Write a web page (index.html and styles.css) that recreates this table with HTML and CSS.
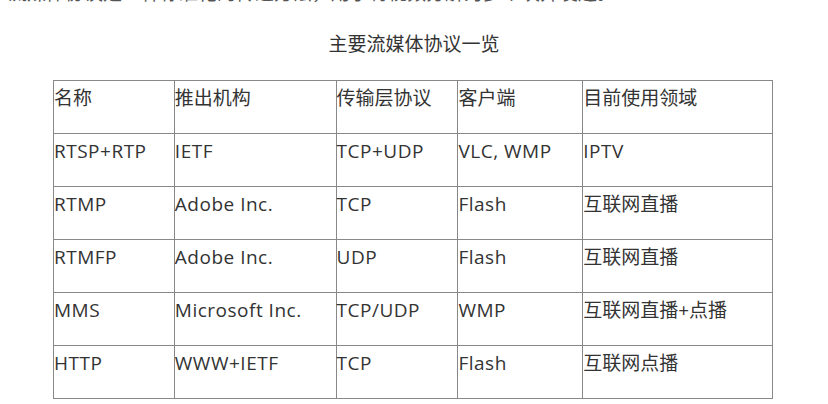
FILE: index.html
```html
<!DOCTYPE html>
<html lang="zh">
<head>
<meta charset="utf-8">
<link rel="stylesheet" href="styles.css">
</head>
<body>
<div class="page">
  <div class="cut"><span>流媒体协议是一种标准化的传递方法，用于将视频分解为多个块并发送。</span></div>
  <p class="title">主要流媒体协议一览</p>
  <table class="proto">
    <colgroup>
      <col class="c1"><col class="c2"><col class="c3"><col class="c4"><col class="c5">
    </colgroup>
    <tr><td>名称</td><td>推出机构</td><td>传输层协议</td><td>客户端</td><td>目前使用领域</td></tr>
    <tr><td class="en">RTSP+RTP</td><td class="en">IETF</td><td class="en">TCP+UDP</td><td class="en">VLC, WMP</td><td class="en">IPTV</td></tr>
    <tr><td class="en">RTMP</td><td class="en">Adobe Inc.</td><td class="en">TCP</td><td class="en">Flash</td><td>互联网直播</td></tr>
    <tr><td class="en">RTMFP</td><td class="en">Adobe Inc.</td><td class="en">UDP</td><td class="en">Flash</td><td>互联网直播</td></tr>
    <tr><td class="en">MMS</td><td class="en">Microsoft Inc.</td><td class="en">TCP/UDP</td><td class="en">WMP</td><td>互联网直播+点播</td></tr>
    <tr><td class="en">HTTP</td><td class="en">WWW+IETF</td><td class="en">TCP</td><td class="en">Flash</td><td>互联网点播</td></tr>
  </table>
</div>
</body>
</html>
```

FILE: styles.css
```css
html, body {
  margin: 0;
  padding: 0;
  background: #fff;
}
.page {
  padding: 0 8px;
  font-family: "Open Sans", "Noto Sans CJK SC", sans-serif;
  font-size: 19px;
  color: #333;
}
.cut {
  height: 3px;
  overflow: hidden;
  display: flex;
  align-items: flex-end;
  color: #555;
}
.cut span {
  line-height: 20px;
  white-space: nowrap;
}
.title {
  margin: 27px 0 22px;
  line-height: 28px;
  text-align: center;
}
.proto {
  border-collapse: collapse;
  width: 720px;
  margin: 0 0 0 45px;
  border: 1px solid #222;
}
.proto td {
  border: 1px solid #888;
  padding: 0;
  height: 52px;
  vertical-align: top;
  line-height: 34px;
  white-space: nowrap;
}
.proto td.en {
  letter-spacing: 0.5px;
}
.c1 { width: 121px; }
.c2 { width: 162px; }
.c3 { width: 122px; }
.c4 { width: 125px; }
.c5 { width: 190px; }
```
